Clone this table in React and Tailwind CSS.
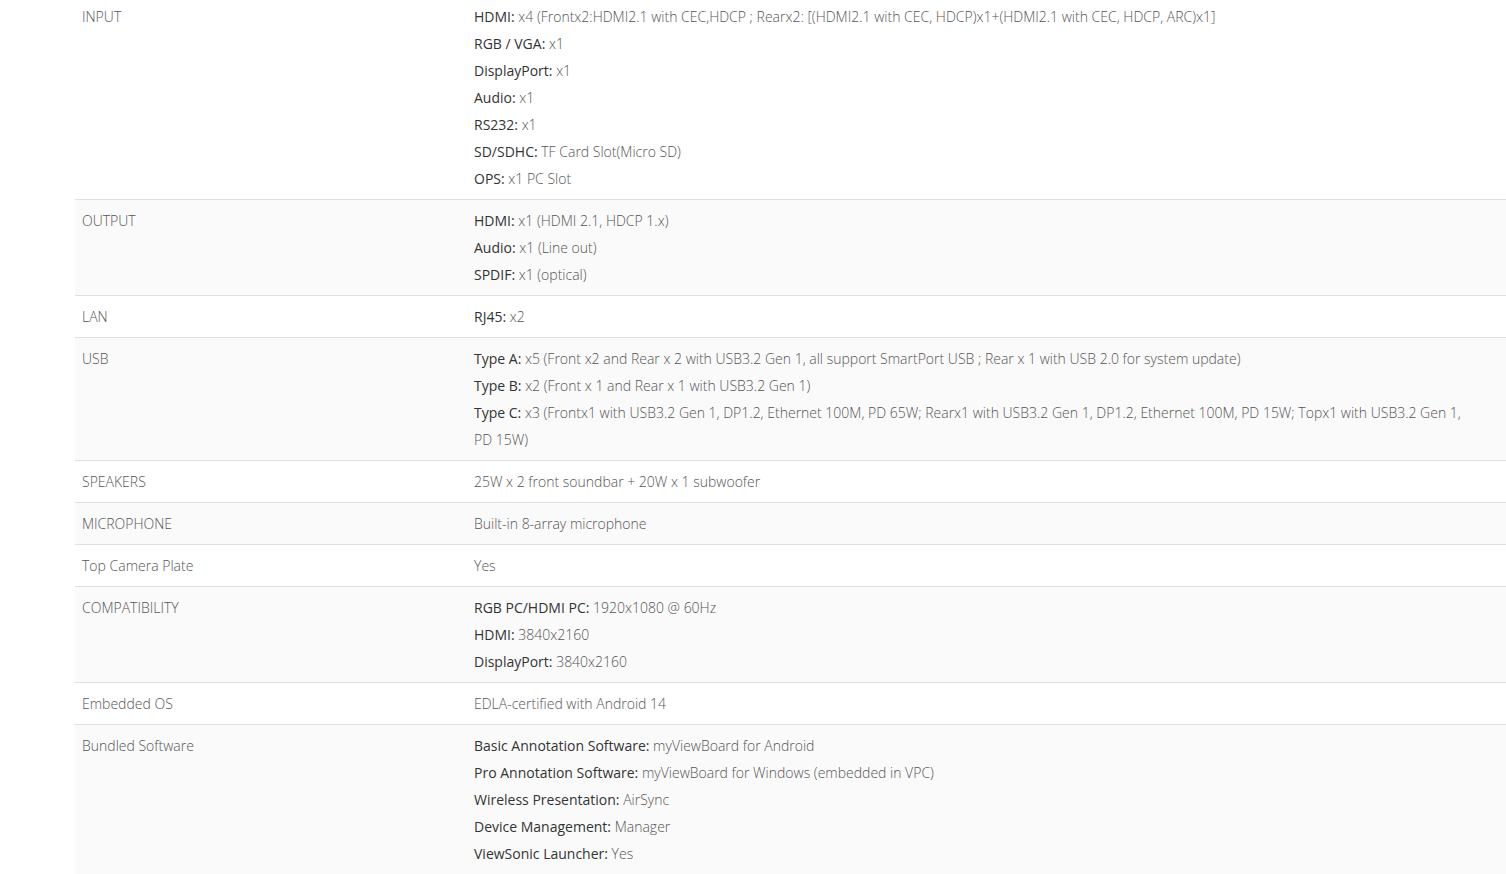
import React from "react";

const specs = [
    {
        label: "INPUT",
        lines: [
            ["HDMI:", "x4 (Frontx2:HDMI2.1 with CEC,HDCP ; Rearx2: [(HDMI2.1 with CEC, HDCP)x1+(HDMI2.1 with CEC, HDCP, ARC)x1]"],
            ["RGB / VGA:", "x1"],
            ["DisplayPort:", "x1"],
            ["Audio:", "x1"],
            ["RS232:", "x1"],
            ["SD/SDHC:", "TF Card Slot(Micro SD)"],
            ["OPS:", "x1 PC Slot"],
        ],
    },
    {
        label: "OUTPUT",
        lines: [
            ["HDMI:", "x1 (HDMI 2.1, HDCP 1.x)"],
            ["Audio:", "x1 (Line out)"],
            ["SPDIF:", "x1 (optical)"],
        ],
    },
    { label: "LAN", lines: [["RJ45:", "x2"]] },
    {
        label: "USB",
        lines: [
            ["Type A:", "x5 (Front x2 and Rear x 2 with USB3.2 Gen 1, all support SmartPort USB ; Rear x 1 with USB 2.0 for system update)"],
            ["Type B:", "x2 (Front x 1 and Rear x 1 with USB3.2 Gen 1)"],
            ["Type C:", "x3 (Frontx1 with USB3.2 Gen 1, DP1.2, Ethernet 100M, PD 65W; Rearx1 with USB3.2 Gen 1, DP1.2, Ethernet 100M, PD 15W; Topx1 with USB3.2 Gen 1, PD 15W)"],
        ],
    },
    { label: "SPEAKERS", lines: [[null, "25W x 2 front soundbar + 20W x 1 subwoofer"]] },
    { label: "MICROPHONE", lines: [[null, "Built-in 8-array microphone"]] },
    { label: "Top Camera Plate", lines: [[null, "Yes"]] },
    {
        label: "COMPATIBILITY",
        lines: [
            ["RGB PC/HDMI PC:", "1920x1080 @ 60Hz"],
            ["HDMI:", "3840x2160"],
            ["DisplayPort:", "3840x2160"],
        ],
    },
    { label: "Embedded OS", lines: [[null, "EDLA-certified with Android 14"]] },
    {
        label: "Bundled Software",
        lines: [
            ["Basic Annotation Software:", "myViewBoard for Android"],
            ["Pro Annotation Software:", "myViewBoard for Windows (embedded in VPC)"],
            ["Wireless Presentation:", "AirSync"],
            ["Device Management:", "Manager"],
            ["ViewSonic Launcher:", "Yes"],
        ],
    },
];

const App = () => {
    return (
        <div className="min-h-screen bg-white overflow-hidden font-['Open_Sans',sans-serif] text-[14px]">
            <div className="ml-[75px] mt-[-4px] w-[1431px]">
                {specs.map((row, i) => (
                    <div
                        key={row.label}
                        className={`grid grid-cols-[399px_1fr] border-b border-[#e0e0e0] ${
                            i % 2 === 1 ? "bg-[#fafafa]" : "bg-white"
                        }`}
                    >
                        <div className="px-[7px] py-[7px] leading-[27px] font-light text-[#555]">
                            {row.label}
                        </div>
                        <div className="py-[7px] pr-[40px] leading-[27px] font-light text-[#555]">
                            {row.lines.map(([key, val], j) => (
                                <div key={j}>
                                    {key && (
                                        <span className="font-normal text-[#333]">{key} </span>
                                    )}
                                    {val}
                                </div>
                            ))}
                        </div>
                    </div>
                ))}
            </div>
        </div>
    );
};

export default App;
